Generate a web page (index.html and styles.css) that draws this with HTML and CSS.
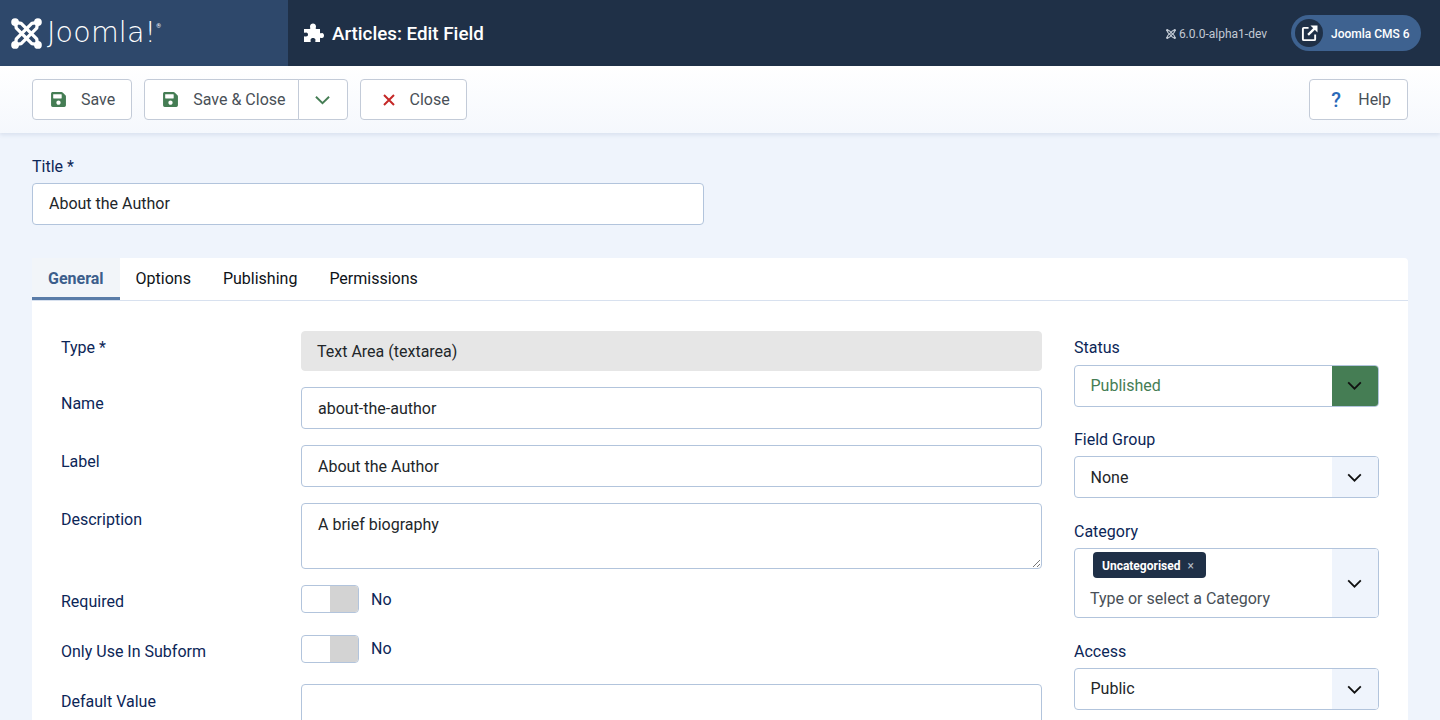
FILE: index.html
```html
<!DOCTYPE html>
<html>
  <head>
    <title>Articles: Edit Field</title>
    <link rel="stylesheet" href="styles.css">
  </head>
  <body>
    <svg class="defs">
      <symbol id="joomla" viewBox="0 0 32 32">
        <g fill="none" stroke="currentColor" stroke-width="3.4" stroke-linejoin="round">
          <path d="M4.5 4.5 L10.500 5.500 L26.500 21.500 L27.500 27.500"/>
          <path d="M4.5 4.500 L5.500 10.500 L21.500 26.500 L27.500 27.500"/>
          <path d="M27.500 4.500 L21.500 5.500 L5.500 21.500 L4.500 27.500"/>
          <path d="M27.500 4.500 L26.500 10.500 L10.500 26.500 L4.500 27.500"/>
        </g>
        <g fill="currentColor">
          <circle cx="4.2" cy="4.2" r="4"/>
          <circle cx="27.8" cy="4.2" r="4"/>
          <circle cx="4.2" cy="27.8" r="4"/>
          <circle cx="27.8" cy="27.8" r="4"/>
        </g>
      </symbol>
      <symbol id="save" viewBox="0 0 448 512">
        <path fill="currentColor" d="M433.941 129.941l-83.882-83.882A48 48 0 0 0 316.118 32H48C21.49 32 0 53.49 0 80v352c0 26.51 21.49 48 48 48h352c26.51 0 48-21.49 48-48V163.882a48 48 0 0 0-14.059-33.941zM224 416c-35.346 0-64-28.654-64-64 0-35.346 28.654-64 64-64s64 28.654 64 64c0 35.346-28.654 64-64 64zm96-304.52V212c0 6.627-5.373 12-12 12H76c-6.627 0-12-5.373-12-12V108c0-6.627 5.373-12 12-12h228.52c3.183 0 6.235 1.264 8.485 3.515l3.48 3.48A11.996 11.996 0 0 1 320 111.48z"/>
      </symbol>
      <symbol id="chevron" viewBox="0 0 16 10">
        <path fill="none" stroke="currentColor" stroke-width="2" d="M1 1.5 L8 8.5 L15 1.5"/>
      </symbol>
    </svg>

    <header class="topbar">
      <div class="brand">
        <svg class="brand-icon"><use href="#joomla"/></svg>
        <span class="brand-name">Joomla!</span><sup class="brand-reg">®</sup>
      </div>
      <div class="page-title">
        <svg class="puzzle" viewBox="0 0 20 20"><path fill="currentColor" d="M0 6 H5.500 C7 6 6 5 6 3.500 C6 1.500 7.500 0.500 9 0.500 C10.500 0.500 12 1.500 12 3.500 C12 5 11 6 12.500 6 H16 V9.500 C16 11 17 10 18 10 C19.500 10 20 11.500 20 12.500 C20 13.500 19.500 15 18 15 C17 15 16 14 16 15.500 V19 H12 C10.500 19 11.500 18 11.500 17 C11.500 15.500 10 15 9 15 C8 15 6.500 15.500 6.500 17 C6.500 18 7.500 19 6 19 H0 V14 C0 12.500 1 13.500 2 13.500 C3.500 13.500 4 12.500 4 11.500 C4 10.500 3.500 9.500 2 9.500 C1 9.500 0 10.500 0 9 Z"/></svg>
        <h1>Articles: Edit Field</h1>
      </div>
      <div class="version">
        <svg class="version-icon"><use href="#joomla"/></svg>
        <span>6.0.0-alpha1-dev</span>
      </div>
      <a class="site-pill">
        <span class="site-pill-icon">
          <svg viewBox="0 0 18 18"><path fill="none" stroke="currentColor" stroke-width="2" stroke-linejoin="round" d="M8 3 H3 Q2 3 2 4 V15 Q2 16 3 16 H14 Q15 16 15 15 V10"/><path fill="none" stroke="currentColor" stroke-width="2.4" d="M7.5 10.5 L15 3"/><path fill="currentColor" d="M10 0.500 H17.500 V8 Z"/></svg>
        </span>
        <span class="site-pill-text">Joomla CMS 6</span>
      </a>
    </header>

    <div class="toolbar">
      <button class="btn"><svg class="icon-save"><use href="#save"/></svg>Save</button>
      <div class="btn-group">
        <button class="btn"><svg class="icon-save"><use href="#save"/></svg>Save &amp; Close</button>
        <button class="btn btn-caret"><svg class="icon-caret"><use href="#chevron"/></svg></button>
      </div>
      <button class="btn btn-close"><svg class="icon-close" viewBox="0 0 12 12"><path fill="none" stroke="currentColor" stroke-width="2" d="M1 1 L11 11 M11 1 L1 11"/></svg>Close</button>
      <button class="btn btn-help"><span class="icon-help">?</span>Help</button>
    </div>

    <main class="content">
      <div class="title-field">
        <label class="form-label">Title *</label>
        <div class="input">About the Author</div>
      </div>

      <section class="card">
        <nav class="tabs">
          <a class="tab active">General</a>
          <a class="tab">Options</a>
          <a class="tab">Publishing</a>
          <a class="tab">Permissions</a>
        </nav>
        <div class="card-body">
          <div class="main-col">
            <div class="row">
              <label class="row-label">Type *</label>
              <div class="input input-disabled">Text Area (textarea)</div>
            </div>
            <div class="row">
              <label class="row-label">Name</label>
              <div class="input">about-the-author</div>
            </div>
            <div class="row">
              <label class="row-label">Label</label>
              <div class="input">About the Author</div>
            </div>
            <div class="row">
              <label class="row-label">Description</label>
              <div class="input textarea">A brief biography
                <svg class="resize" viewBox="0 0 8 8"><path fill="none" stroke="#777" d="M1 8 L8 1 M5 8 L8 5"/></svg>
              </div>
            </div>
            <div class="row row-switch">
              <label class="row-label">Required</label>
              <div class="switch"><span class="switch-off"></span></div>
              <span class="switch-text">No</span>
            </div>
            <div class="row row-switch">
              <label class="row-label">Only Use In Subform</label>
              <div class="switch"><span class="switch-off"></span></div>
              <span class="switch-text">No</span>
            </div>
            <div class="row row-default">
              <label class="row-label">Default Value</label>
              <div class="input textarea"></div>
            </div>
          </div>

          <aside class="side-col">
            <div class="field">
              <label class="form-label">Status</label>
              <div class="select select-published">
                <span class="select-value">Published</span>
                <span class="select-arrow"><svg><use href="#chevron"/></svg></span>
              </div>
            </div>
            <div class="field">
              <label class="form-label">Field Group</label>
              <div class="select">
                <span class="select-value">None</span>
                <span class="select-arrow"><svg><use href="#chevron"/></svg></span>
              </div>
            </div>
            <div class="field field-category">
              <label class="form-label">Category</label>
              <div class="select select-multi">
                <div class="select-value">
                  <span class="chip">Uncategorised<span class="chip-x">×</span></span>
                  <span class="placeholder">Type or select a Category</span>
                </div>
                <span class="select-arrow"><svg><use href="#chevron"/></svg></span>
              </div>
            </div>
            <div class="field field-access">
              <label class="form-label">Access</label>
              <div class="select">
                <span class="select-value">Public</span>
                <span class="select-arrow"><svg><use href="#chevron"/></svg></span>
              </div>
            </div>
          </aside>
        </div>
      </section>
    </main>
  </body>
</html>
```

FILE: styles.css
```css
/* Joomla admin edit form */
html,
body {
  height: 720px;
  overflow: hidden;
}
body {
  margin: 0;
  background-color: #eff4fc;
  color: #22262a;
  font-family: Roboto, "Liberation Sans", sans-serif;
  font-size: 16px;
  line-height: 24px;
}
.defs {
  display: none;
}

/* top bar */
.topbar {
  display: flex;
  align-items: center;
  height: 66px;
  background-color: #1f3047;
  color: #fff;
}
.brand {
  display: flex;
  align-items: center;
  width: 288px;
  height: 100%;
  padding-left: 11px;
  box-sizing: border-box;
  background-color: #2e486b;
}
.brand-icon {
  width: 31px;
  height: 31px;
}
.brand-name {
  margin: 0 0 1px 5px;
  font-family: "DejaVu Sans", sans-serif;
  font-weight: 200;
  font-size: 28.5px;
  line-height: 34px;
  letter-spacing: 0.2px;
}
.brand-reg {
  align-self: flex-start;
  margin-top: 22px;
  font-size: 6px;
  line-height: 8px;
}
.page-title {
  display: flex;
  align-items: center;
  flex: 1;
  padding-left: 16px;
}
.puzzle {
  width: 20px;
  height: 20px;
  margin-right: 8px;
}
h1 {
  margin: 1px 0 0;
  font-size: 18.8px;
  font-weight: 500;
  line-height: 24px;
}
.version {
  display: flex;
  align-items: center;
  padding-top: 1px;
  color: #c3cad4;
  font-size: 12px;
}
.version-icon {
  width: 10px;
  height: 10px;
  margin-right: 3px;
}
.site-pill {
  display: flex;
  align-items: center;
  width: 130px;
  height: 36px;
  margin: 0 19px 0 24px;
  box-sizing: border-box;
  padding-left: 4px;
  border-radius: 18px;
  background-color: #3e6290;
  font-size: 12px;
  font-weight: 500;
}
.site-pill-icon {
  display: flex;
  align-items: center;
  justify-content: center;
  width: 28px;
  height: 28px;
  margin-right: 8px;
  border-radius: 50%;
  background-color: #1f3047;
}
.site-pill-icon svg {
  width: 17px;
  height: 17px;
}
.site-pill-text {
  padding-top: 1px;
}

/* toolbar */
.toolbar {
  display: flex;
  align-items: center;
  gap: 12px;
  height: 67px;
  padding: 0 32px;
  background: linear-gradient(#fff, #f5f8fd);
  box-shadow: 0 2px 4px rgba(60, 90, 140, 0.12);
  position: relative;
}
.btn {
  display: flex;
  align-items: center;
  height: 41px;
  padding: 0 16px 0 18px;
  border: 1px solid #c3cbd8;
  border-radius: 4px;
  background-color: #fff;
  color: #495057;
  font: inherit;
}
.btn-group {
  display: flex;
}
.btn-group .btn:first-child {
  border-radius: 4px 0 0 4px;
  padding-right: 12px;
}
.btn-group .btn-caret:last-child {
  margin-left: -1px;
  width: 50px;
  padding: 0;
  justify-content: center;
  border-radius: 0 4px 4px 0;
}
.btn-close {
  padding: 0 16px 0 22px;
}
.icon-save {
  width: 15px;
  height: 17px;
  margin-right: 15px;
  color: #457d54;
}
.icon-caret {
  width: 15px;
  height: 10px;
  color: #457d54;
}
.icon-close {
  width: 12px;
  height: 12px;
  margin-right: 15px;
  color: #c52827;
}
.btn-help {
  margin-left: auto;
  padding-left: 20px;
}
.icon-help {
  width: 12px;
  margin-right: 16px;
  color: #2a69b8;
  font-size: 20px;
  font-weight: 500;
}

/* form */
.content {
  padding: 22px 32px 0;
}
.form-label {
  display: block;
  margin-bottom: 4px;
  color: #0c2657;
}
.title-field {
  width: 672px;
  margin-bottom: 33px;
}
.input {
  box-sizing: border-box;
  height: 42px;
  padding: 9px 16px 0;
  border: 1px solid #b2c4dc;
  border-radius: 4px;
  background-color: #fff;
  color: #22262a;
}
.title-field .input {
  padding-top: 8px;
}
.input-disabled {
  height: 40px;
  border-color: #e6e6e6;
  background-color: #e6e6e6;
  padding: 8px 15px;
}
.textarea {
  position: relative;
  height: 66px;
}
.resize {
  position: absolute;
  right: 1px;
  bottom: 1px;
  width: 8px;
  height: 8px;
}
.card {
  border-radius: 4px;
  background-color: #fff;
}
.tabs {
  display: flex;
  height: 42px;
  border-bottom: 1px solid #d8e1ef;
}
.tab {
  padding: 9px 16px 0;
  color: #0e1318;
}
.tab.active {
  height: 42px;
  box-sizing: border-box;
  border-bottom: 3px solid #5a7ca8;
  background-color: #f2f5f9;
  color: #3c5e8c;
  font-weight: 700;
}
.card-body {
  display: flex;
  gap: 32px;
  padding: 30px 29px 0;
}
.main-col {
  flex: 1;
}
.row {
  display: flex;
  margin-bottom: 16px;
}
.row-label {
  flex: none;
  width: 240px;
  padding-top: 5px;
  color: #0c2657;
}
.row > .input {
  flex: 1;
}
.row-switch {
  align-items: flex-start;
  height: 33.5px;
}
.row-default .row-label {
  padding-top: 6px;
}
.switch {
  display: flex;
  justify-content: flex-end;
  box-sizing: border-box;
  width: 58px;
  height: 28px;
  border: 1px solid #b2c4dc;
  border-radius: 4px;
  overflow: hidden;
  background-color: #fff;
}
.switch-off {
  width: 28px;
  background-color: #d3d3d3;
}
.switch-text {
  margin: 2.5px 0 0 12px;
  color: #0c2657;
}
.side-col {
  flex: none;
  width: 305px;
  padding-top: 4px;
}
.side-col .form-label {
  padding-top: 1px;
  margin-bottom: 4.5px;
}
.field {
  margin-bottom: 20.25px;
}
.field-category {
  margin-bottom: 20.75px;
}
.select {
  display: flex;
  box-sizing: border-box;
  height: 42px;
  border: 1px solid #b2c4dc;
  border-radius: 4px;
  overflow: hidden;
  background-color: #fff;
}
.select-value {
  flex: 1;
  padding: 8.5px 15.5px 0;
}
.field-access .select-value {
  padding-top: 8px;
}
.select-arrow {
  display: flex;
  align-items: center;
  justify-content: center;
  box-sizing: border-box;
  width: 46px;
  padding-right: 2px;
  background-color: #eff4fc;
}
.select-arrow svg {
  width: 15px;
  height: 9px;
  color: #111;
}
.select-published .select-value {
  color: #457d54;
}
.select-published .select-arrow {
  background-color: #457d54;
}
.select-multi {
  height: 70px;
}
.select-multi .select-value {
  display: flex;
  flex-direction: column;
  align-items: flex-start;
  padding: 3px 0 0 15px;
}
.chip {
  display: flex;
  align-items: center;
  height: 26px;
  box-sizing: border-box;
  margin-left: 3px;
  padding: 1px 12px 0 9px;
  border-radius: 4px;
  background-color: #1f3047;
  color: #fff;
  font-size: 12px;
  font-weight: 700;
}
.chip-x {
  margin-left: 7px;
  color: #b5bcc6;
  font-weight: 400;
}
.placeholder {
  margin-top: 9px;
  color: #495057;
}
```
